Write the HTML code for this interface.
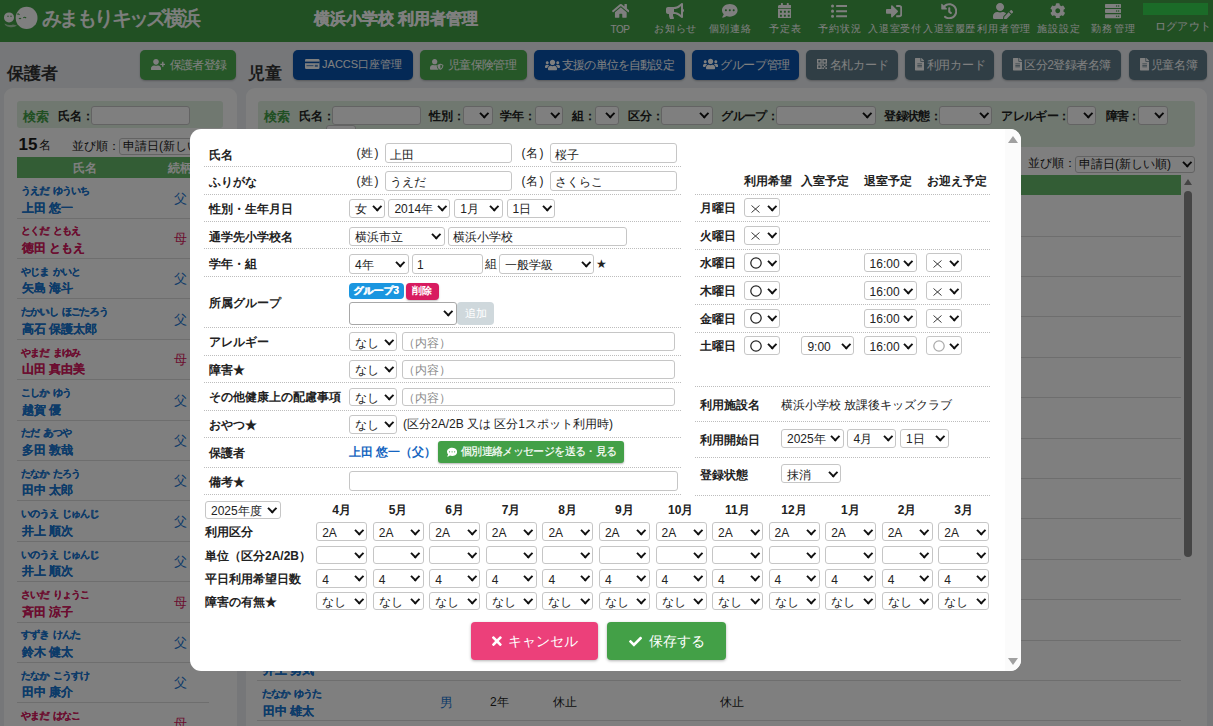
<!DOCTYPE html><html><head><meta charset="utf-8"><title>利用者管理</title><style>
*{box-sizing:border-box}
html,body{margin:0;padding:0}
body{width:1213px;height:726px;overflow:hidden;position:relative;background:#eceff3;font-family:"Liberation Sans",sans-serif;color:#222}
.ab{position:absolute}
.t{position:absolute;white-space:nowrap;line-height:1}
.hdr{left:0;top:0;width:1213px;height:42px;background:#43a047}
.nav{position:absolute;top:0;height:42px;text-align:center;color:#fff;font-size:10.5px}
.nav .lbl{position:absolute;left:-30px;right:-30px;top:23px;text-align:center;white-space:nowrap;line-height:11px}
.btn{position:absolute;top:50.2px;height:29.4px;border-radius:5px;color:#fff;font-size:12px;line-height:29px;white-space:nowrap;box-shadow:0 1px 2px rgba(0,0,0,.25)}
.bg{background:#4caf50}.bn{background:#0852ac}.bd{background:#607d8b}
.card{position:absolute;background:#fff;border-radius:9px}
.sbox{position:absolute;background:#e1f0e1;border-radius:3px}
.lab{position:absolute;font-size:12px;font-weight:bold;white-space:nowrap;line-height:1;color:#222}
.in{position:absolute;height:20px;border:1px solid #c6c6c6;border-radius:3px;background:#fff;font-size:12px;line-height:18px;padding-left:4px;white-space:nowrap;color:#222;overflow:hidden}
.sl{position:absolute;height:20px;border:1px solid #c6c6c6;border-radius:3px;background:#fff;font-size:12px;line-height:18px;padding-left:5px;white-space:nowrap;color:#222}
.sl:after{content:"";position:absolute;right:4px;top:calc(50% - 5px);width:4.5px;height:4.5px;border-right:2px solid #111;border-bottom:2px solid #111;transform:rotate(45deg)}
.dot{position:absolute;height:1px;background-image:linear-gradient(to right,#bdbdbd 50%,transparent 50%);background-size:2px 1px}
.ovl{position:absolute;left:0;top:0;width:1213px;height:726px;background:rgba(0,0,0,.5)}
.modal{position:absolute;left:190px;top:129px;width:831px;height:542px;background:#fff;border-radius:11px;overflow:hidden}
</style></head><body>
<div class="ab hdr"></div>
<svg class="ab" style="left:0;top:0" width="42" height="42" viewBox="0 0 42 42"><circle cx="9" cy="17.4" r="5" fill="#fff"/><path d="M4.5 23.5 Q9 26 13 24.5 L17 25.5 Q14 28 9 27 Q5 26 4.5 23.5Z" fill="#fff" opacity=".55"/><ellipse cx="26.6" cy="17.9" rx="10.9" ry="11.1" fill="#fff"/><path d="M17.3 14.3 q1.2 -1 2.2 0.6 M19 18.2 q1 1.2 2 -0.2 M23.3 17.8 q1.5 -1.3 2.8 0.3" stroke="#43a047" stroke-width="1.1" fill="none"/><circle cx="8" cy="16.3" r=".7" fill="#43a047"/><circle cx="11" cy="16.3" r=".7" fill="#43a047"/></svg>
<div class="t" style="left:42px;top:7.5px;font-size:20px;color:#fff;letter-spacing:-2.6px;-webkit-text-stroke:0.6px #fff">みまもりキッズ横浜</div>
<div class="t" style="left:314px;top:11px;font-size:16px;font-weight:bold;color:#fff;-webkit-text-stroke:0.35px #fff">横浜小学校 利用者管理</div>
<div class="t" style="left:610.6px;top:24.5px;font-size:10px;color:#fff;letter-spacing:-0.50px">TOP</div>
<svg style="position:absolute;left:611.9px;top:2.5px" width="17.60" height="15.64" viewBox="0 0 576 512"><path fill="#fff" d="M280.37 148.26L96 300.11V464a16 16 0 0 0 16 16l112.06-.29a16 16 0 0 0 15.92-16V368a16 16 0 0 1 16-16h64a16 16 0 0 1 16 16v95.64a16 16 0 0 0 16 16.05L464 480a16 16 0 0 0 16-16V300L295.67 148.26a12.19 12.19 0 0 0-15.3 0zM571.6 251.47L488 182.56V44.05a12 12 0 0 0-12-12h-56a12 12 0 0 0-12 12v72.61L318.47 43a48 48 0 0 0-61 0L4.34 251.47a12 12 0 0 0-1.6 16.9l25.5 31A12 12 0 0 0 45.15 301l235.22-193.74a12.19 12.19 0 0 1 15.3 0L530.9 301a12 12 0 0 0 16.9-1.6l25.5-31a12 12 0 0 0-1.7-16.93z"/></svg>
<div class="t" style="left:654.1px;top:23.5px;font-size:10px;color:#fff;letter-spacing:0.73px">お知らせ</div>
<svg style="position:absolute;left:666.2px;top:2.5px" width="18.00" height="16.00" viewBox="0 0 576 512"><path fill="#fff" d="M576 240c0-23.63-12.95-44.04-32-55.12V32.01C544 23.26 537.02 0 512 0c-7.120 0-14.19 2.38-19.98 7.020l-85.03 68.03C364.28 109.19 310.66 128 256 128H64c-35.35 0-64 28.65-64 64v96c0 35.35 28.65 64 64 64h33.7c-1.39 10.48-2.18 21.14-2.18 32 0 39.77 9.26 77.35 25.56 110.94 5.19 10.69 16.52 17.06 28.4 17.06h74.28c26.05 0 41.69-29.84 25.9-50.56-16.4-21.52-26.15-48.36-26.15-77.44 0-11.11 1.620-21.79 4.41-32H256c54.66 0 108.28 18.81 150.98 52.95l85.03 68.03a32.023 32.023 0 0 0 19.98 7.02c24.92 0 32-22.78 32-32V295.13C563.05 284.04 576 263.63 576 240zm-96 141.42l-33.05-26.44C392.95 311.78 325.12 288 256 288v-96c69.12 0 136.95-23.78 190.95-66.98L480 98.58v282.84z"/></svg>
<div class="t" style="left:708.5px;top:23.5px;font-size:10px;color:#fff;letter-spacing:0.97px">個別連絡</div>
<svg style="position:absolute;left:722.2px;top:2.5px" width="15.60" height="15.60" viewBox="0 0 512 512"><path fill="#fff" d="M256 32C114.6 32 0 125.1 0 240c0 49.6 21.4 95 57 130.7C44.5 421.1 2.7 466 2.2 466.5c-2.2 2.3-2.8 5.7-1.5 8.7S4.8 480 8 480c66.3 0 116-31.8 140.6-51.4 32.7 12.3 69 19.4 107.4 19.4 141.4 0 256-93.1 256-208S397.4 32 256 32zM128 272c-17.7 0-32-14.3-32-32s14.3-32 32-32 32 14.3 32 32-14.3 32-32 32zm128 0c-17.7 0-32-14.3-32-32s14.3-32 32-32 32 14.3 32 32-14.3 32-32 32zm128 0c-17.7 0-32-14.3-32-32s14.3-32 32-32 32 14.3 32 32-14.3 32-32 32z"/></svg>
<div class="t" style="left:768.6px;top:23.5px;font-size:10px;color:#fff;letter-spacing:1.40px">予定表</div>
<svg style="position:absolute;left:777.8px;top:2.5px" width="13.70" height="15.66" viewBox="0 0 448 512"><path fill="#fff" d="M0 464c0 26.5 21.5 48 48 48h352c26.5 0 48-21.5 48-48V192H0v272zm320-196c0-6.6 5.4-12 12-12h40c6.6 0 12 5.4 12 12v40c0 6.6-5.4 12-12 12h-40c-6.6 0-12-5.4-12-12v-40zm0 128c0-6.6 5.4-12 12-12h40c6.6 0 12 5.4 12 12v40c0 6.6-5.4 12-12 12h-40c-6.6 0-12-5.4-12-12v-40zM192 268c0-6.6 5.4-12 12-12h40c6.6 0 12 5.4 12 12v40c0 6.6-5.4 12-12 12h-40c-6.6 0-12-5.4-12-12v-40zm0 128c0-6.6 5.4-12 12-12h40c6.6 0 12 5.4 12 12v40c0 6.6-5.4 12-12 12h-40c-6.6 0-12-5.4-12-12v-40zM64 268c0-6.6 5.4-12 12-12h40c6.6 0 12 5.4 12 12v40c0 6.6-5.4 12-12 12H76c-6.6 0-12-5.4-12-12v-40zm0 128c0-6.6 5.4-12 12-12h40c6.6 0 12 5.4 12 12v40c0 6.6-5.4 12-12 12H76c-6.6 0-12-5.4-12-12v-40zM400 64h-48V16c0-8.8-7.2-16-16-16h-32c-8.8 0-16 7.2-16 16v48H160V16c0-8.8-7.2-16-16-16h-32c-8.8 0-16 7.2-16 16v48H48C21.5 64 0 85.5 0 112v48h448v-48c0-26.5-21.5-48-48-48z"/></svg>
<div class="t" style="left:818.3px;top:23.5px;font-size:10px;color:#fff;letter-spacing:0.93px">予約状況</div>
<svg style="position:absolute;left:830.9px;top:2.5px" width="16.30" height="16.30" viewBox="0 0 512 512"><path fill="#fff" d="M48 48a48 48 0 1 0 48 48 48 48 0 0 0-48-48zm0 160a48 48 0 1 0 48 48 48 48 0 0 0-48-48zm0 160a48 48 0 1 0 48 48 48 48 0 0 0-48-48zm448 16H176a16 16 0 0 0-16 16v32a16 16 0 0 0 16 16h320a16 16 0 0 0 16-16v-32a16 16 0 0 0-16-16zm0-320H176a16 16 0 0 0-16 16v32a16 16 0 0 0 16 16h320a16 16 0 0 0 16-16V80a16 16 0 0 0-16-16zm0 160H176a16 16 0 0 0-16 16v32a16 16 0 0 0 16 16h320a16 16 0 0 0 16-16v-32a16 16 0 0 0-16-16z"/></svg>
<div class="t" style="left:868px;top:23.5px;font-size:10px;color:#fff;letter-spacing:0.75px">入退室受付</div>
<svg style="position:absolute;left:886.1px;top:2.5px" width="16.30" height="16.30" viewBox="0 0 512 512"><path fill="#fff" d="M416 448h-84c-6.6 0-12-5.4-12-12v-40c0-6.6 5.4-12 12-12h84c17.7 0 32-14.3 32-32V160c0-17.7-14.3-32-32-32h-84c-6.6 0-12-5.4-12-12V76c0-6.6 5.4-12 12-12h84c53 0 96 43 96 96v192c0 53-43 96-96 96zm-47-201L201 79c-15-15-41-4.5-41 17v96H24c-13.3 0-24 10.7-24 24v96c0 13.3 10.7 24 24 24h136v96c0 21.5 26 32 41 17l168-168c9.3-9.4 9.3-24.6 0-34z"/></svg>
<div class="t" style="left:923.3px;top:23.5px;font-size:10px;color:#fff;letter-spacing:0.55px">入退室履歴</div>
<svg style="position:absolute;left:940.5419354838709px;top:2.5px" width="16.52" height="16.52" viewBox="0 0 512 512"><path fill="#fff" d="M504 255.531c.253 136.64-111.18 248.372-247.82 248.468-59.015.042-113.223-20.53-155.822-54.911-11.077-8.94-11.905-25.541-1.839-35.607l11.267-11.267c8.609-8.609 22.353-9.551 31.891-1.984C173.062 425.135 212.781 440 256 440c101.705 0 184-82.311 184-184 0-101.705-82.311-184-184-184-48.814 0-93.149 18.969-126.068 49.932l50.754 50.754c10.08 10.08 2.941 27.314-11.313 27.314H24c-8.837 0-16-7.163-16-16V38.627c0-14.254 17.234-21.393 27.314-11.314l49.372 49.372C129.209 34.136 189.552 8 256 8c136.81 0 247.747 110.78 248 247.531zm-180.912 78.784l9.823-12.63c8.138-10.463 6.253-25.542-4.21-33.679L288 256.349V152c0-13.255-10.745-24-24-24h-16c-13.255 0-24 10.745-24 24v135.651l65.409 50.874c10.463 8.137 25.541 6.253 33.679-4.21z"/></svg>
<div class="t" style="left:977.4px;top:23.5px;font-size:10px;color:#fff;letter-spacing:0.72px">利用者管理</div>
<svg style="position:absolute;left:993.1px;top:2.5px" width="20.20" height="16.16" viewBox="0 0 640 512"><path fill="#fff" d="M224 256c70.7 0 128-57.3 128-128S294.7 0 224 0 96 57.3 96 128s57.3 128 128 128zm89.6 32h-16.7c-22.2 10.2-46.9 16-72.9 16s-50.6-5.8-72.9-16h-16.7C60.2 288 0 348.2 0 422.4V464c0 26.5 21.5 48 48 48h274.9c-2.4-6.8-3.4-14-2.6-21.3l6.8-60.9 1.2-11.1 7.9-7.9 77.3-77.3c-24.5-27.7-60-45.5-99.9-45.5zm45.3 145.3l-6.8 61c-1.1 10.2 7.5 18.8 17.6 17.6l60.9-6.8 137.9-137.9-71.7-71.7-137.9 137.8zM633 268.9L595.1 231c-9.3-9.3-24.5-9.3-33.8 0l-37.8 37.8-4.1 4.1 71.8 71.7 41.8-41.8c9.3-9.4 9.3-24.5 0-33.9z"/></svg>
<div class="t" style="left:1036.8px;top:23.5px;font-size:10px;color:#fff;letter-spacing:1.03px">施設設定</div>
<svg style="position:absolute;left:1050.3843096234311px;top:2.5px" width="15.53" height="15.53" viewBox="0 0 512 512"><path fill="#fff" d="M487.4 315.7l-42.6-24.6c4.3-23.2 4.3-47 0-70.2l42.6-24.6c4.9-2.8 7.1-8.6 5.5-14-11.1-35.6-30-67.8-54.7-94.6-3.8-4.1-10-5.1-14.8-2.3L380.8 110c-17.9-15.4-38.5-27.3-60.8-35.1V25.8c0-5.6-3.9-10.5-9.4-11.7-36.7-8.2-74.3-7.8-109.2 0-5.5 1.2-9.4 6.1-9.4 11.7V75c-22.2 7.9-42.8 19.8-60.8 35.1L88.7 85.5c-4.9-2.8-11-1.9-14.8 2.3-24.7 26.7-43.6 58.9-54.7 94.6-1.700 5.4.6 11.2 5.5 14L67.3 221c-4.3 23.2-4.3 47 0 70.2l-42.6 24.6c-4.9 2.8-7.1 8.6-5.5 14 11.1 35.6 30 67.8 54.7 94.6 3.8 4.1 10 5.1 14.8 2.3l42.6-24.6c17.9 15.4 38.5 27.3 60.8 35.1v49.2c0 5.6 3.9 10.5 9.4 11.7 36.7 8.2 74.3 7.8 109.2 0 5.5-1.2 9.4-6.1 9.4-11.7v-49.2c22.2-7.9 42.8-19.8 60.8-35.1l42.6 24.6c4.9 2.8 11 1.9 14.8-2.3 24.7-26.7 43.6-58.9 54.7-94.6 1.5-5.5-.7-11.3-5.6-14.1zM256 336c-44.1 0-80-35.9-80-80s35.9-80 80-80 80 35.9 80 80-35.9 80-80 80z"/></svg>
<div class="t" style="left:1091.4px;top:23.5px;font-size:10px;color:#fff;letter-spacing:1.10px">勤務管理</div>
<svg style="position:absolute;left:1104.7px;top:2.5px" width="16.20" height="16.20" viewBox="0 0 512 512"><path fill="#fff" d="M480 160H32c-17.673 0-32-14.327-32-32V64c0-17.673 14.327-32 32-32h448c17.673 0 32 14.327 32 32v64c0 17.673-14.327 32-32 32zm-48-88c-13.255 0-24 10.745-24 24s10.745 24 24 24 24-10.745 24-24-10.745-24-24-24zm-64 0c-13.255 0-24 10.745-24 24s10.745 24 24 24 24-10.745 24-24-10.745-24-24-24zm112 248H32c-17.673 0-32-14.327-32-32v-64c0-17.673 14.327-32 32-32h448c17.673 0 32 14.327 32 32v64c0 17.673-14.327 32-32 32zm-48-88c-13.255 0-24 10.745-24 24s10.745 24 24 24 24-10.745 24-24-10.745-24-24-24zm-64 0c-13.255 0-24 10.745-24 24s10.745 24 24 24 24-10.745 24-24-10.745-24-24-24zm112 248H32c-17.673 0-32-14.327-32-32v-64c0-17.673 14.327-32 32-32h448c17.673 0 32 14.327 32 32v64c0 17.673-14.327 32-32 32zm-48-88c-13.255 0-24 10.745-24 24s10.745 24 24 24 24-10.745 24-24-10.745-24-24-24zm-64 0c-13.255 0-24 10.745-24 24s10.745 24 24 24 24-10.745 24-24-10.745-24-24-24z"/></svg>
<div class="ab" style="left:1143px;top:3px;width:65px;height:12px;background:#36d650"></div>
<div class="t" style="left:1154.5px;top:21px;font-size:11px;color:#fff;letter-spacing:0.4px">ログアウト</div>
<div class="t" style="left:6.5px;top:64.5px;font-size:17px;font-weight:bold;color:#333">保護者</div>
<div class="t" style="left:248px;top:64.5px;font-size:17px;font-weight:bold;color:#333">児童</div>
<div class="btn bg" style="left:140.4px;width:96.0px"></div>
<div class="t" style="left:169.6px;top:58.5px;font-size:12px;color:#fff;letter-spacing:-0.65px">保護者登録</div>
<svg style="position:absolute;left:150.9px;top:58.78px" width="14.30" height="11.44" viewBox="0 0 640 512"><path fill="#fff" d="M624 208h-64v-64c0-8.8-7.2-16-16-16h-32c-8.8 0-16 7.2-16 16v64h-64c-8.8 0-16 7.2-16 16v32c0 8.8 7.2 16 16 16h64v64c0 8.8 7.2 16 16 16h32c8.8 0 16-7.2 16-16v-64h64c8.8 0 16-7.2 16-16v-32c0-8.8-7.2-16-16-16zm-400 48c70.7 0 128-57.3 128-128S294.7 0 224 0 96 57.3 96 128s57.3 128 128 128zm89.6 32h-16.7c-22.2 10.2-46.9 16-72.9 16s-50.6-5.8-72.9-16h-16.7C60.2 288 0 348.2 0 422.4V464c0 26.5 21.5 48 48 48h352c26.5 0 48-21.5 48-48v-41.6c0-74.2-60.2-134.4-134.4-134.4z"/></svg>
<div class="btn bn" style="left:293.2px;width:119.60000000000002px"></div>
<div class="t" style="left:322.1px;top:59px;font-size:11px;color:#fff;letter-spacing:-0.01px">JACCS口座管理</div>
<svg class="ab" style="left:305px;top:59px" width="14.5" height="10" viewBox="0 0 14.5 10"><rect x="0" y="0" width="14.5" height="10" rx="1.2" fill="#fff"/><rect x="0" y="2.6" width="14.5" height="1.6" fill="#0852ac"/><rect x="1.5" y="6" width="7" height="1.2" fill="#0852ac" opacity=".6"/><rect x="9.8" y="5.8" width="3" height="2" fill="#0852ac" opacity=".7"/></svg>
<div class="btn bg" style="left:420px;width:106.79999999999995px"></div>
<div class="t" style="left:447.9px;top:58.5px;font-size:12px;color:#fff;letter-spacing:-0.62px">児童保険管理</div>
<svg style="position:absolute;left:430.3px;top:59.14px" width="13.40" height="10.72" viewBox="0 0 640 512"><path fill="#fff" d="M622.3 271.1l-115.2-45c-4.1-1.6-12.6-3.7-22.2 0l-115.2 45c-10.7 4.2-17.7 14-17.7 24.9 0 111.6 68.7 188.8 132.9 213.9 9.6 3.7 18 1.6 22.2 0C558.4 489.9 640 420.5 640 296c0-10.9-7-20.7-17.7-24.9zM496 462.4V273.3l95.5 37.3c-5.6 87.1-60.9 135.4-95.5 151.8zM224 256c70.7 0 128-57.3 128-128S294.7 0 224 0 96 57.3 96 128s57.3 128 128 128zm96 40c0-2.5.8-4.8 1.1-7.2-2.5-.1-4.9-.8-7.5-.8h-16.7c-22.2 10.2-46.9 16-72.9 16s-50.6-5.8-72.9-16h-16.7C60.2 288 0 348.2 0 422.4V464c0 26.5 21.5 48 48 48h352c6.8 0 13.3-1.5 19.2-4-54-42.9-99.2-116.7-99.2-212z"/></svg>
<div class="btn bn" style="left:533.8px;width:150.9000000000001px"></div>
<div class="t" style="left:562.1px;top:58.5px;font-size:12px;color:#fff;letter-spacing:-0.83px">支援の単位を自動設定</div>
<svg style="position:absolute;left:544.6px;top:58.5px" width="15.00" height="12.00" viewBox="0 0 640 512"><path fill="#fff" d="M96 224c35.3 0 64-28.7 64-64s-28.7-64-64-64-64 28.7-64 64 28.7 64 64 64zm448 0c35.3 0 64-28.7 64-64s-28.7-64-64-64-64 28.7-64 64 28.7 64 64 64zm32 32h-64c-17.6 0-33.5 7.1-45.1 18.6 40.3 22.1 68.9 62 75.1 109.4h66c17.7 0 32-14.3 32-32v-32c0-35.3-28.7-64-64-64zm-256 0c61.9 0 112-50.1 112-112S381.9 32 320 32 208 82.1 208 144s50.1 112 112 112zm76.8 32h-8.3c-20.8 10-43.9 16-68.5 16s-47.6-6-68.5-16h-8.3C179.6 288 128 339.6 128 403.2V432c0 26.5 21.5 48 48 48h288c26.5 0 48-21.5 48-48v-28.8c0-63.6-51.6-115.2-115.2-115.2zm-223.7-13.4C161.5 263.1 145.6 256 128 256H64c-35.3 0-64 28.7-64 64v32c0 17.7 14.3 32 32 32h65.9c6.3-47.4 34.9-87.3 75.2-109.4z"/></svg>
<div class="btn bn" style="left:691.7px;width:107.29999999999995px"></div>
<div class="t" style="left:720.2px;top:58.5px;font-size:12px;color:#fff;letter-spacing:-0.40px">グループ管理</div>
<svg style="position:absolute;left:702.7px;top:58.46px" width="15.10" height="12.08" viewBox="0 0 640 512"><path fill="#fff" d="M96 224c35.3 0 64-28.7 64-64s-28.7-64-64-64-64 28.7-64 64 28.7 64 64 64zm448 0c35.3 0 64-28.7 64-64s-28.7-64-64-64-64 28.7-64 64 28.7 64 64 64zm32 32h-64c-17.6 0-33.5 7.1-45.1 18.6 40.3 22.1 68.9 62 75.1 109.4h66c17.7 0 32-14.3 32-32v-32c0-35.3-28.7-64-64-64zm-256 0c61.9 0 112-50.1 112-112S381.9 32 320 32 208 82.1 208 144s50.1 112 112 112zm76.8 32h-8.3c-20.8 10-43.9 16-68.5 16s-47.6-6-68.5-16h-8.3C179.6 288 128 339.6 128 403.2V432c0 26.5 21.5 48 48 48h288c26.5 0 48-21.5 48-48v-28.8c0-63.6-51.6-115.2-115.2-115.2zm-223.7-13.4C161.5 263.1 145.6 256 128 256H64c-35.3 0-64 28.7-64 64v32c0 17.7 14.3 32 32 32h65.9c6.3-47.4 34.9-87.3 75.2-109.4z"/></svg>
<div class="btn bd" style="left:805.8px;width:91.90000000000009px"></div>
<div class="t" style="left:829.6px;top:58.5px;font-size:12px;color:#fff;letter-spacing:-0.20px">名札カード</div>
<svg class="ab" style="left:817px;top:59.3px" width="10" height="10" viewBox="0 0 10 10"><g fill="none" stroke="#fff" stroke-width="1.3"><rect x=".65" y=".65" width="3.4" height="3.4"/><rect x="5.95" y=".65" width="3.4" height="3.4"/><rect x=".65" y="5.95" width="3.4" height="3.4"/></g><g fill="#fff"><rect x="5.3" y="5.3" width="1.6" height="1.6"/><rect x="8.4" y="5.3" width="1.6" height="1.6"/><rect x="5.3" y="8.4" width="1.6" height="1.6"/><rect x="8.4" y="8.4" width="1.6" height="1.6"/><rect x="6.9" y="6.9" width="1.5" height="1.5"/></g></svg>
<div class="btn bd" style="left:904.5px;width:89.89999999999998px"></div>
<div class="t" style="left:926.7px;top:58.5px;font-size:12px;color:#fff;letter-spacing:-0.20px">利用カード</div>
<svg style="position:absolute;left:915px;top:58.3px" width="9.30" height="12.40" viewBox="0 0 384 512"><path fill="#fff" d="M224 136V0H24C10.7 0 0 10.7 0 24v464c0 13.3 10.7 24 24 24h336c13.3 0 24-10.7 24-24V160H248c-13.2 0-24-10.8-24-24zm64 236c0 6.6-5.4 12-12 12H108c-6.6 0-12-5.4-12-12v-8c0-6.6 5.4-12 12-12h168c6.6 0 12 5.4 12 12v8zm0-64c0 6.6-5.4 12-12 12H108c-6.6 0-12-5.4-12-12v-8c0-6.6 5.4-12 12-12h168c6.6 0 12 5.4 12 12v8zm0-72v8c0 6.6-5.4 12-12 12H108c-6.6 0-12-5.4-12-12v-8c0-6.6 5.4-12 12-12h168c6.6 0 12 5.4 12 12zm96-114.1v6.1H256V0h6.1c6.4 0 12.5 2.5 17 7l97.9 98c4.5 4.5 7 10.6 7 16.9z"/></svg>
<div class="btn bd" style="left:1002.2px;width:118.5px"></div>
<div class="t" style="left:1024.4px;top:58.5px;font-size:12px;color:#fff;letter-spacing:-0.56px">区分2登録者名簿</div>
<svg style="position:absolute;left:1013px;top:58.3px" width="9.30" height="12.40" viewBox="0 0 384 512"><path fill="#fff" d="M224 136V0H24C10.7 0 0 10.7 0 24v464c0 13.3 10.7 24 24 24h336c13.3 0 24-10.7 24-24V160H248c-13.2 0-24-10.8-24-24zm64 236c0 6.6-5.4 12-12 12H108c-6.6 0-12-5.4-12-12v-8c0-6.6 5.4-12 12-12h168c6.6 0 12 5.4 12 12v8zm0-64c0 6.6-5.4 12-12 12H108c-6.6 0-12-5.4-12-12v-8c0-6.6 5.4-12 12-12h168c6.6 0 12 5.4 12 12v8zm0-72v8c0 6.6-5.4 12-12 12H108c-6.6 0-12-5.4-12-12v-8c0-6.6 5.4-12 12-12h168c6.6 0 12 5.4 12 12zm96-114.1v6.1H256V0h6.1c6.4 0 12.5 2.5 17 7l97.9 98c4.5 4.5 7 10.6 7 16.9z"/></svg>
<div class="btn bd" style="left:1128.6px;width:78.60000000000014px"></div>
<div class="t" style="left:1150.7px;top:58.5px;font-size:12px;color:#fff;letter-spacing:-0.33px">児童名簿</div>
<svg style="position:absolute;left:1139.5px;top:58.3px" width="9.30" height="12.40" viewBox="0 0 384 512"><path fill="#fff" d="M224 136V0H24C10.7 0 0 10.7 0 24v464c0 13.3 10.7 24 24 24h336c13.3 0 24-10.7 24-24V160H248c-13.2 0-24-10.8-24-24zm64 236c0 6.6-5.4 12-12 12H108c-6.6 0-12-5.4-12-12v-8c0-6.6 5.4-12 12-12h168c6.6 0 12 5.4 12 12v8zm0-64c0 6.6-5.4 12-12 12H108c-6.6 0-12-5.4-12-12v-8c0-6.6 5.4-12 12-12h168c6.6 0 12 5.4 12 12v8zm0-72v8c0 6.6-5.4 12-12 12H108c-6.6 0-12-5.4-12-12v-8c0-6.6 5.4-12 12-12h168c6.6 0 12 5.4 12 12zm96-114.1v6.1H256V0h6.1c6.4 0 12.5 2.5 17 7l97.9 98c4.5 4.5 7 10.6 7 16.9z"/></svg>
<div class="card" style="left:4px;top:88px;width:233px;height:700px"></div>
<div class="card" style="left:245.5px;top:88px;width:961px;height:700px"></div>
<div class="sbox" style="left:17px;top:101px;width:206px;height:27px"></div>
<div class="t" style="left:23px;top:110px;font-size:13px;font-weight:bold;color:#43a047">検索</div>
<div class="lab" style="left:58px;top:110px">氏名：</div>
<div class="in" style="left:91.4px;top:106px;width:99px;height:19px"></div>
<div class="t" style="left:18.5px;top:136px;font-size:17px;font-weight:bold;color:#1a1a1a">15</div>
<div class="t" style="left:39px;top:139px;font-size:12px;color:#222">名</div>
<div class="t" style="left:72px;top:140px;font-size:12px;color:#222">並び順：</div>
<div class="sl" style="left:119px;top:137.5px;width:120px;height:17px;line-height:15px;padding-left:3px">申請日(新しい順)</div>
<div class="ab" style="left:17px;top:157px;width:192px;height:20.5px;background:#66bb6a"></div>
<div class="t" style="left:73px;top:162px;font-size:12px;font-weight:bold;color:#fff">氏名</div>
<div class="t" style="left:168px;top:162px;font-size:12px;font-weight:bold;color:#fff">続柄</div>
<div class="t" style="left:21px;top:186.0px;font-size:10px;font-weight:bold;color:#1976d2;letter-spacing:-0.8px;word-spacing:2px;text-shadow:0.25px 0 0 #1976d2">うえだ ゆういち</div>
<div class="t" style="left:21.5px;top:201.5px;font-size:12px;font-weight:bold;color:#1976d2;text-shadow:0.3px 0 0 #1976d2">上田 悠一</div>
<div class="t" style="left:174px;top:191.5px;font-size:13px;color:#1976d2">父</div>
<div class="ab" style="left:17px;top:217.5px;width:192px;height:1px;background:#dcdcdc"></div>
<div class="t" style="left:21px;top:226.4px;font-size:10px;font-weight:bold;color:#d81b60;letter-spacing:-0.8px;word-spacing:2px;text-shadow:0.25px 0 0 #d81b60">とくだ ともえ</div>
<div class="t" style="left:21.5px;top:241.9px;font-size:12px;font-weight:bold;color:#d81b60;text-shadow:0.3px 0 0 #d81b60">徳田 ともえ</div>
<div class="t" style="left:174px;top:231.9px;font-size:13px;color:#d81b60">母</div>
<div class="ab" style="left:17px;top:257.9px;width:192px;height:1px;background:#dcdcdc"></div>
<div class="t" style="left:21px;top:266.8px;font-size:10px;font-weight:bold;color:#1976d2;letter-spacing:-0.8px;word-spacing:2px;text-shadow:0.25px 0 0 #1976d2">やじま かいと</div>
<div class="t" style="left:21.5px;top:282.3px;font-size:12px;font-weight:bold;color:#1976d2;text-shadow:0.3px 0 0 #1976d2">矢島 海斗</div>
<div class="t" style="left:174px;top:272.3px;font-size:13px;color:#1976d2">父</div>
<div class="ab" style="left:17px;top:298.3px;width:192px;height:1px;background:#dcdcdc"></div>
<div class="t" style="left:21px;top:307.2px;font-size:10px;font-weight:bold;color:#1976d2;letter-spacing:-0.8px;word-spacing:2px;text-shadow:0.25px 0 0 #1976d2">たかいし ほごたろう</div>
<div class="t" style="left:21.5px;top:322.7px;font-size:12px;font-weight:bold;color:#1976d2;text-shadow:0.3px 0 0 #1976d2">高石 保護太郎</div>
<div class="t" style="left:174px;top:312.7px;font-size:13px;color:#1976d2">父</div>
<div class="ab" style="left:17px;top:338.7px;width:192px;height:1px;background:#dcdcdc"></div>
<div class="t" style="left:21px;top:347.59999999999997px;font-size:10px;font-weight:bold;color:#d81b60;letter-spacing:-0.8px;word-spacing:2px;text-shadow:0.25px 0 0 #d81b60">やまだ まゆみ</div>
<div class="t" style="left:21.5px;top:363.09999999999997px;font-size:12px;font-weight:bold;color:#d81b60;text-shadow:0.3px 0 0 #d81b60">山田 真由美</div>
<div class="t" style="left:174px;top:353.09999999999997px;font-size:13px;color:#d81b60">母</div>
<div class="ab" style="left:17px;top:379.09999999999997px;width:192px;height:1px;background:#dcdcdc"></div>
<div class="t" style="left:21px;top:387.99999999999994px;font-size:10px;font-weight:bold;color:#1976d2;letter-spacing:-0.8px;word-spacing:2px;text-shadow:0.25px 0 0 #1976d2">こしか ゆう</div>
<div class="t" style="left:21.5px;top:403.49999999999994px;font-size:12px;font-weight:bold;color:#1976d2;text-shadow:0.3px 0 0 #1976d2">越賀 優</div>
<div class="t" style="left:174px;top:393.49999999999994px;font-size:13px;color:#1976d2">父</div>
<div class="ab" style="left:17px;top:419.49999999999994px;width:192px;height:1px;background:#dcdcdc"></div>
<div class="t" style="left:21px;top:428.3999999999999px;font-size:10px;font-weight:bold;color:#1976d2;letter-spacing:-0.8px;word-spacing:2px;text-shadow:0.25px 0 0 #1976d2">ただ あつや</div>
<div class="t" style="left:21.5px;top:443.8999999999999px;font-size:12px;font-weight:bold;color:#1976d2;text-shadow:0.3px 0 0 #1976d2">多田 敦哉</div>
<div class="t" style="left:174px;top:433.8999999999999px;font-size:13px;color:#1976d2">父</div>
<div class="ab" style="left:17px;top:459.8999999999999px;width:192px;height:1px;background:#dcdcdc"></div>
<div class="t" style="left:21px;top:468.7999999999999px;font-size:10px;font-weight:bold;color:#1976d2;letter-spacing:-0.8px;word-spacing:2px;text-shadow:0.25px 0 0 #1976d2">たなか たろう</div>
<div class="t" style="left:21.5px;top:484.2999999999999px;font-size:12px;font-weight:bold;color:#1976d2;text-shadow:0.3px 0 0 #1976d2">田中 太郎</div>
<div class="t" style="left:174px;top:474.2999999999999px;font-size:13px;color:#1976d2">父</div>
<div class="ab" style="left:17px;top:500.2999999999999px;width:192px;height:1px;background:#dcdcdc"></div>
<div class="t" style="left:21px;top:509.1999999999999px;font-size:10px;font-weight:bold;color:#1976d2;letter-spacing:-0.8px;word-spacing:2px;text-shadow:0.25px 0 0 #1976d2">いのうえ じゅんじ</div>
<div class="t" style="left:21.5px;top:524.6999999999998px;font-size:12px;font-weight:bold;color:#1976d2;text-shadow:0.3px 0 0 #1976d2">井上 順次</div>
<div class="t" style="left:174px;top:514.6999999999998px;font-size:13px;color:#1976d2">父</div>
<div class="ab" style="left:17px;top:540.6999999999998px;width:192px;height:1px;background:#dcdcdc"></div>
<div class="t" style="left:21px;top:549.5999999999999px;font-size:10px;font-weight:bold;color:#1976d2;letter-spacing:-0.8px;word-spacing:2px;text-shadow:0.25px 0 0 #1976d2">いのうえ じゅんじ</div>
<div class="t" style="left:21.5px;top:565.0999999999999px;font-size:12px;font-weight:bold;color:#1976d2;text-shadow:0.3px 0 0 #1976d2">井上 順次</div>
<div class="t" style="left:174px;top:555.0999999999999px;font-size:13px;color:#1976d2">父</div>
<div class="ab" style="left:17px;top:581.0999999999999px;width:192px;height:1px;background:#dcdcdc"></div>
<div class="t" style="left:21px;top:589.9999999999999px;font-size:10px;font-weight:bold;color:#d81b60;letter-spacing:-0.8px;word-spacing:2px;text-shadow:0.25px 0 0 #d81b60">さいだ りょうこ</div>
<div class="t" style="left:21.5px;top:605.4999999999999px;font-size:12px;font-weight:bold;color:#d81b60;text-shadow:0.3px 0 0 #d81b60">斉田 涼子</div>
<div class="t" style="left:174px;top:595.4999999999999px;font-size:13px;color:#d81b60">母</div>
<div class="ab" style="left:17px;top:621.4999999999999px;width:192px;height:1px;background:#dcdcdc"></div>
<div class="t" style="left:21px;top:630.3999999999999px;font-size:10px;font-weight:bold;color:#1976d2;letter-spacing:-0.8px;word-spacing:2px;text-shadow:0.25px 0 0 #1976d2">すずき けんた</div>
<div class="t" style="left:21.5px;top:645.8999999999999px;font-size:12px;font-weight:bold;color:#1976d2;text-shadow:0.3px 0 0 #1976d2">鈴木 健太</div>
<div class="t" style="left:174px;top:635.8999999999999px;font-size:13px;color:#1976d2">父</div>
<div class="ab" style="left:17px;top:661.8999999999999px;width:192px;height:1px;background:#dcdcdc"></div>
<div class="t" style="left:21px;top:670.7999999999998px;font-size:10px;font-weight:bold;color:#1976d2;letter-spacing:-0.8px;word-spacing:2px;text-shadow:0.25px 0 0 #1976d2">たなか こうすけ</div>
<div class="t" style="left:21.5px;top:686.2999999999998px;font-size:12px;font-weight:bold;color:#1976d2;text-shadow:0.3px 0 0 #1976d2">田中 康介</div>
<div class="t" style="left:174px;top:676.2999999999998px;font-size:13px;color:#1976d2">父</div>
<div class="ab" style="left:17px;top:702.2999999999998px;width:192px;height:1px;background:#dcdcdc"></div>
<div class="t" style="left:21px;top:711.1999999999998px;font-size:10px;font-weight:bold;color:#d81b60;letter-spacing:-0.8px;word-spacing:2px;text-shadow:0.25px 0 0 #d81b60">やまだ はなこ</div>
<div class="t" style="left:21.5px;top:726.6999999999998px;font-size:12px;font-weight:bold;color:#d81b60;text-shadow:0.3px 0 0 #d81b60">山田 花子</div>
<div class="t" style="left:174px;top:716.6999999999998px;font-size:13px;color:#d81b60">母</div>
<div class="ab" style="left:17px;top:742.6999999999998px;width:192px;height:1px;background:#dcdcdc"></div>
<div class="sbox" style="left:257.5px;top:101px;width:937px;height:45.5px"></div>
<div class="t" style="left:263.5px;top:110px;font-size:13px;font-weight:bold;color:#43a047">検索</div>
<div class="lab" style="left:299px;top:110px;letter-spacing:0px">氏名：</div>
<div class="in" style="left:332.3px;top:106px;width:88.39999999999998px;height:18.5px"></div>
<div class="lab" style="left:429px;top:110px;letter-spacing:0px">性別：</div>
<div class="sl" style="left:462.6px;top:106px;width:30.0px;height:18.5px"></div>
<div class="lab" style="left:500px;top:110px;letter-spacing:0px">学年：</div>
<div class="sl" style="left:534.5px;top:106px;width:28.899999999999977px;height:18.5px"></div>
<div class="lab" style="left:572px;top:110px;letter-spacing:0px">組：</div>
<div class="sl" style="left:594.6px;top:106px;width:24.0px;height:18.5px"></div>
<div class="lab" style="left:628px;top:110px;letter-spacing:0px">区分：</div>
<div class="sl" style="left:661.4px;top:106px;width:51.200000000000045px;height:18.5px"></div>
<div class="lab" style="left:721.2px;top:110px;letter-spacing:-0.6px">グループ：</div>
<div class="sl" style="left:776.2px;top:106px;width:99.5px;height:18.5px"></div>
<div class="lab" style="left:884.2px;top:110px;letter-spacing:-0.6px">登録状態：</div>
<div class="sl" style="left:939.4px;top:106px;width:53.10000000000002px;height:18.5px"></div>
<div class="lab" style="left:1001.2px;top:110px;letter-spacing:-0.6px">アレルギー：</div>
<div class="sl" style="left:1067.2px;top:106px;width:29.200000000000045px;height:18.5px"></div>
<div class="lab" style="left:1105.5px;top:110px;letter-spacing:-0.8px">障害：</div>
<div class="sl" style="left:1138.4px;top:106px;width:29.59999999999991px;height:18.5px"></div>
<div class="in" style="left:325.5px;top:125px;width:30px;height:18px"></div>
<div class="t" style="left:1028px;top:157px;font-size:12px;color:#222">並び順：</div>
<div class="sl" style="left:1075px;top:155.5px;width:120px;height:17px;line-height:15px;padding-left:3px">申請日(新しい順)</div>
<div class="ab" style="left:257px;top:175px;width:924px;height:20px;background:#66bb6a"></div>
<div class="ab" style="left:257px;top:235.6px;width:924px;height:1px;background:#dcdcdc"></div>
<div class="ab" style="left:257px;top:276.0px;width:924px;height:1px;background:#dcdcdc"></div>
<div class="ab" style="left:257px;top:316.4px;width:924px;height:1px;background:#dcdcdc"></div>
<div class="ab" style="left:257px;top:356.79999999999995px;width:924px;height:1px;background:#dcdcdc"></div>
<div class="ab" style="left:257px;top:397.19999999999993px;width:924px;height:1px;background:#dcdcdc"></div>
<div class="ab" style="left:257px;top:437.5999999999999px;width:924px;height:1px;background:#dcdcdc"></div>
<div class="ab" style="left:257px;top:477.9999999999999px;width:924px;height:1px;background:#dcdcdc"></div>
<div class="ab" style="left:257px;top:518.3999999999999px;width:924px;height:1px;background:#dcdcdc"></div>
<div class="ab" style="left:257px;top:558.7999999999998px;width:924px;height:1px;background:#dcdcdc"></div>
<div class="ab" style="left:257px;top:599.1999999999998px;width:924px;height:1px;background:#dcdcdc"></div>
<div class="ab" style="left:257px;top:639.5999999999998px;width:924px;height:1px;background:#dcdcdc"></div>
<div class="ab" style="left:257px;top:679.9999999999998px;width:924px;height:1px;background:#dcdcdc"></div>
<div class="ab" style="left:257px;top:720.3999999999997px;width:924px;height:1px;background:#dcdcdc"></div>
<div class="t" style="left:262.5px;top:663.5px;font-size:12px;font-weight:bold;color:#1976d2;text-shadow:0.3px 0 0 #1976d2">井上 勇気</div>
<div class="t" style="left:262px;top:689px;font-size:10px;font-weight:bold;color:#1976d2;letter-spacing:-0.8px;word-spacing:2px;text-shadow:0.25px 0 0 #1976d2">たなか ゆうた</div>
<div class="t" style="left:262.5px;top:705px;font-size:12px;font-weight:bold;color:#1976d2;text-shadow:0.3px 0 0 #1976d2">田中 雄太</div>
<div class="t" style="left:440px;top:696px;font-size:13px;color:#1976d2">男</div>
<div class="t" style="left:490px;top:696px;font-size:12px;color:#222">2年</div>
<div class="t" style="left:553px;top:696px;font-size:12px;color:#222">休止</div>
<div class="t" style="left:720px;top:696px;font-size:12px;color:#222">休止</div>
<div class="ab" style="left:1183.5px;top:179px;width:0;height:0;border-left:4.5px solid transparent;border-right:4.5px solid transparent;border-bottom:6px solid #888"></div>
<div class="ab" style="left:1183.6px;top:191.4px;width:8.2px;height:366px;border-radius:4px;background:#8a8a8a"></div>
<div class="ovl"></div>
<div class="ab" style="left:190px;top:129px;width:831px;height:542px;background:#fff;border-radius:11px"></div>
<div class="ab" style="left:1005px;top:129px;width:16px;height:542px;background:#fbfbfb;border-radius:0 11px 11px 0"></div>
<div class="dot" style="left:204px;top:166px;width:478px"></div>
<div class="dot" style="left:204px;top:194px;width:478px"></div>
<div class="dot" style="left:204px;top:221px;width:478px"></div>
<div class="dot" style="left:204px;top:248px;width:478px"></div>
<div class="dot" style="left:204px;top:276px;width:478px"></div>
<div class="dot" style="left:204px;top:327px;width:478px"></div>
<div class="dot" style="left:204px;top:355px;width:478px"></div>
<div class="dot" style="left:204px;top:382px;width:478px"></div>
<div class="dot" style="left:204px;top:410px;width:478px"></div>
<div class="dot" style="left:204px;top:437px;width:478px"></div>
<div class="dot" style="left:204px;top:467px;width:478px"></div>
<div class="dot" style="left:204px;top:494px;width:478px"></div>
<div class="lab" style="left:209px;top:149px">氏名</div>
<div class="t" style="left:356.5px;top:147px;font-size:12px;letter-spacing:1px">(姓)</div>
<div class="in" style="left:385px;top:143px;width:126.5px;height:20px;line-height:18px;padding-top:1.5px;">上田</div>
<div class="t" style="left:521.5px;top:147px;font-size:12px;letter-spacing:1px">(名)</div>
<div class="in" style="left:550px;top:143px;width:127px;height:20px;line-height:18px;padding-top:1.5px;">桜子</div>
<div class="lab" style="left:209px;top:176px">ふりがな</div>
<div class="t" style="left:356.5px;top:174.5px;font-size:12px;letter-spacing:1px">(姓)</div>
<div class="in" style="left:385px;top:171px;width:126.5px;height:19.5px;line-height:17.5px;padding-top:1.5px;">うえだ</div>
<div class="t" style="left:521.5px;top:174.5px;font-size:12px;letter-spacing:1px">(名)</div>
<div class="in" style="left:550px;top:171px;width:127px;height:19.5px;line-height:17.5px;padding-top:1.5px;">さくらこ</div>
<div class="lab" style="left:209px;top:203px">性別・生年月日</div>
<div class="sl" style="left:349px;top:198.5px;width:36px;height:19.5px;line-height:17.5px;padding-top:1.5px;">女</div>
<div class="sl" style="left:388.4px;top:198.5px;width:62.0px;height:19.5px;line-height:17.5px;padding-top:1.5px;">2014年</div>
<div class="sl" style="left:454.3px;top:198.5px;width:48.30000000000001px;height:19.5px;line-height:17.5px;padding-top:1.5px;">1月</div>
<div class="sl" style="left:506.5px;top:198.5px;width:48.5px;height:19.5px;line-height:17.5px;padding-top:1.5px;">1日</div>
<div class="lab" style="left:209px;top:231px">通学先小学校名</div>
<div class="sl" style="left:349px;top:226.5px;width:95.80000000000001px;height:19.19999999999999px;line-height:17.19999999999999px;padding-top:1.5px;">横浜市立</div>
<div class="in" style="left:448.3px;top:226.5px;width:178.90000000000003px;height:19.19999999999999px;line-height:17.19999999999999px;padding-top:1.5px;">横浜小学校</div>
<div class="lab" style="left:209px;top:258px">学年・組</div>
<div class="sl" style="left:349px;top:254.3px;width:59.80000000000001px;height:19.30000000000001px;line-height:17.30000000000001px;padding-top:1.5px;">4年</div>
<div class="in" style="left:412px;top:254.3px;width:71px;height:19.30000000000001px;line-height:17.30000000000001px;padding-top:1.5px;">1</div>
<div class="t" style="left:485px;top:258px;font-size:12px;">組</div>
<div class="sl" style="left:499.4px;top:254.3px;width:94.89999999999998px;height:19.30000000000001px;line-height:17.30000000000001px;padding-top:1.5px;">一般学級</div>
<div class="t" style="left:596px;top:258px;font-size:12px;">★</div>
<div class="lab" style="left:209px;top:297px">所属グループ</div>
<div class="ab" style="left:348.6px;top:283px;width:55px;height:16px;border-radius:4px;background:#1a96e0;color:#fff;font-size:10px;font-weight:bold;line-height:16px;text-align:center;text-shadow:0.3px 0 0 #fff">グループ3</div>
<div class="ab" style="left:405.7px;top:283.3px;width:33.2px;height:16.5px;border-radius:4px;background:#d81b60;color:#fff;font-size:10px;font-weight:bold;line-height:16.5px;text-align:center;box-shadow:0 1px 2px rgba(0,0,0,.25)">削除</div>
<div class="sl" style="left:348.6px;top:302.4px;width:108.19999999999999px;height:22.200000000000045px;line-height:20.200000000000045px;padding-top:1.5px;border-color:#a8a8a8"></div>
<div class="ab" style="left:457.4px;top:302.2px;width:36.3px;height:22.4px;border-radius:4px;background:#cfd8dc;color:#fff;font-size:11px;line-height:22px;text-align:center">追加</div>
<div class="lab" style="left:209px;top:336px">アレルギー</div>
<div class="sl" style="left:349px;top:332.4px;width:48.39999999999998px;height:18.80000000000001px;line-height:16.80000000000001px;padding-top:1.5px;">なし</div>
<div class="in" style="left:401.5px;top:332.4px;width:273.5px;height:18.80000000000001px;line-height:16.80000000000001px;padding-top:1.5px;color:#8a8a8a;padding-left:0">（内容）</div>
<div class="lab" style="left:209px;top:364px">障害★</div>
<div class="sl" style="left:349px;top:359.8px;width:48.39999999999998px;height:18.80000000000001px;line-height:16.80000000000001px;padding-top:1.5px;">なし</div>
<div class="in" style="left:401.5px;top:359.8px;width:273.5px;height:18.80000000000001px;line-height:16.80000000000001px;padding-top:1.5px;color:#8a8a8a;padding-left:0">（内容）</div>
<div class="lab" style="left:209px;top:391px">その他健康上の配慮事項</div>
<div class="sl" style="left:349px;top:387.5px;width:48.39999999999998px;height:18.80000000000001px;line-height:16.80000000000001px;padding-top:1.5px;">なし</div>
<div class="in" style="left:401.5px;top:387.5px;width:273.5px;height:18.80000000000001px;line-height:16.80000000000001px;padding-top:1.5px;color:#8a8a8a;padding-left:0">（内容）</div>
<div class="lab" style="left:209px;top:419px">おやつ★</div>
<div class="sl" style="left:349px;top:414.9px;width:48.39999999999998px;height:18.80000000000001px;line-height:16.80000000000001px;padding-top:1.5px;">なし</div>
<div class="t" style="left:403px;top:418px;font-size:12px;">(区分2A/2B 又は 区分1スポット利用時)</div>
<div class="lab" style="left:209px;top:447px">保護者</div>
<div class="t" style="left:349px;top:445.5px;font-size:12px;color:#1565c0;font-weight:bold">上田 悠一（父）</div>
<div class="ab" style="left:438px;top:441.3px;width:186px;height:21.7px;border-radius:3px;background:#43a047;box-shadow:0 1px 2px rgba(0,0,0,.3)"></div>
<svg style="position:absolute;left:446.9px;top:447px" width="10.20" height="10.20" viewBox="0 0 512 512"><path fill="#fff" d="M256 32C114.6 32 0 125.1 0 240c0 49.6 21.4 95 57 130.7C44.5 421.1 2.7 466 2.2 466.5c-2.2 2.3-2.8 5.7-1.5 8.7S4.8 480 8 480c66.3 0 116-31.8 140.6-51.4 32.7 12.3 69 19.4 107.4 19.4 141.4 0 256-93.1 256-208S397.4 32 256 32zM128 272c-17.7 0-32-14.3-32-32s14.3-32 32-32 32 14.3 32 32-14.3 32-32 32zm128 0c-17.7 0-32-14.3-32-32s14.3-32 32-32 32 14.3 32 32-14.3 32-32 32zm128 0c-17.7 0-32-14.3-32-32s14.3-32 32-32 32 14.3 32 32-14.3 32-32 32z"/></svg>
<div class="t" style="left:460.8px;top:445.5px;font-size:11px;color:#fff;letter-spacing:-0.62px;-webkit-text-stroke:0.2px #fff">個別連絡メッセージを送る・見る</div>
<div class="lab" style="left:209px;top:476px">備考★</div>
<div class="in" style="left:349px;top:471.2px;width:328.79999999999995px;height:19.600000000000023px;line-height:17.600000000000023px;padding-top:1.5px;"></div>
<div class="t" style="left:744.4px;top:175px;font-size:12px;font-weight:bold">利用希望</div>
<div class="t" style="left:801.4px;top:175px;font-size:12px;font-weight:bold">入室予定</div>
<div class="t" style="left:863.6px;top:175px;font-size:12px;font-weight:bold">退室予定</div>
<div class="t" style="left:927.2px;top:175px;font-size:12px;font-weight:bold">お迎え予定</div>
<div class="dot" style="left:695px;top:194px;width:296px"></div>
<div class="dot" style="left:695px;top:221px;width:296px"></div>
<div class="dot" style="left:695px;top:249px;width:296px"></div>
<div class="dot" style="left:695px;top:276px;width:296px"></div>
<div class="dot" style="left:695px;top:304px;width:296px"></div>
<div class="dot" style="left:695px;top:331.5px;width:296px"></div>
<div class="dot" style="left:695px;top:386px;width:296px"></div>
<div class="dot" style="left:695px;top:421px;width:296px"></div>
<div class="dot" style="left:695px;top:456.7px;width:296px"></div>
<div class="dot" style="left:695px;top:494.8px;width:296px"></div>
<div class="lab" style="left:700px;top:202.2px">月曜日</div>
<div class="sl" style="left:744.1px;top:198.2px;width:36.10000000000002px;height:19.0px;line-height:17.0px;padding-top:1.5px;"></div>
<svg class="ab" style="left:751.2px;top:204.7px" width="9" height="8" viewBox="0 0 9 8"><path d="M0.5 0.5 L8.5 7.5 M8.5 0.5 L0.5 7.5" stroke="#222" stroke-width="0.9"/></svg>
<div class="lab" style="left:700px;top:229.79999999999998px">火曜日</div>
<div class="sl" style="left:744.1px;top:225.79999999999998px;width:36.10000000000002px;height:19.0px;line-height:17.0px;padding-top:1.5px;"></div>
<svg class="ab" style="left:751.2px;top:232.29999999999998px" width="9" height="8" viewBox="0 0 9 8"><path d="M0.5 0.5 L8.5 7.5 M8.5 0.5 L0.5 7.5" stroke="#222" stroke-width="0.9"/></svg>
<div class="lab" style="left:700px;top:257.4px">水曜日</div>
<div class="sl" style="left:744.1px;top:253.39999999999998px;width:36.10000000000002px;height:19.0px;line-height:17.0px;padding-top:1.5px;"></div>
<svg class="ab" style="left:750.2px;top:257.09999999999997px" width="12" height="12" viewBox="0 0 12 12"><circle cx="6" cy="6" r="5.2" stroke="#222" stroke-width="1.25" fill="none"/></svg>
<div class="sl" style="left:863.6px;top:253.39999999999998px;width:53.39999999999998px;height:19.0px;line-height:17.0px;padding-top:1.5px;">16:00</div>
<div class="sl" style="left:926.3px;top:253.39999999999998px;width:36.200000000000045px;height:19.0px;line-height:17.0px;padding-top:1.5px;"></div>
<svg class="ab" style="left:933.2px;top:259.9px" width="9" height="8" viewBox="0 0 9 8"><path d="M0.5 0.5 L8.5 7.5 M8.5 0.5 L0.5 7.5" stroke="#222" stroke-width="0.9"/></svg>
<div class="lab" style="left:700px;top:285.0px">木曜日</div>
<div class="sl" style="left:744.1px;top:281.0px;width:36.10000000000002px;height:19.0px;line-height:17.0px;padding-top:1.5px;"></div>
<svg class="ab" style="left:750.2px;top:284.7px" width="12" height="12" viewBox="0 0 12 12"><circle cx="6" cy="6" r="5.2" stroke="#222" stroke-width="1.25" fill="none"/></svg>
<div class="sl" style="left:863.6px;top:281.0px;width:53.39999999999998px;height:19.0px;line-height:17.0px;padding-top:1.5px;">16:00</div>
<div class="sl" style="left:926.3px;top:281.0px;width:36.200000000000045px;height:19.0px;line-height:17.0px;padding-top:1.5px;"></div>
<svg class="ab" style="left:933.2px;top:287.5px" width="9" height="8" viewBox="0 0 9 8"><path d="M0.5 0.5 L8.5 7.5 M8.5 0.5 L0.5 7.5" stroke="#222" stroke-width="0.9"/></svg>
<div class="lab" style="left:700px;top:312.6px">金曜日</div>
<div class="sl" style="left:744.1px;top:308.6px;width:36.10000000000002px;height:19.0px;line-height:17.0px;padding-top:1.5px;"></div>
<svg class="ab" style="left:750.2px;top:312.3px" width="12" height="12" viewBox="0 0 12 12"><circle cx="6" cy="6" r="5.2" stroke="#222" stroke-width="1.25" fill="none"/></svg>
<div class="sl" style="left:863.6px;top:308.6px;width:53.39999999999998px;height:19.0px;line-height:17.0px;padding-top:1.5px;">16:00</div>
<div class="sl" style="left:926.3px;top:308.6px;width:36.200000000000045px;height:19.0px;line-height:17.0px;padding-top:1.5px;"></div>
<svg class="ab" style="left:933.2px;top:315.1px" width="9" height="8" viewBox="0 0 9 8"><path d="M0.5 0.5 L8.5 7.5 M8.5 0.5 L0.5 7.5" stroke="#222" stroke-width="0.9"/></svg>
<div class="lab" style="left:700px;top:340.20000000000005px">土曜日</div>
<div class="sl" style="left:744.1px;top:336.20000000000005px;width:36.10000000000002px;height:19.0px;line-height:17.0px;padding-top:1.5px;"></div>
<svg class="ab" style="left:750.2px;top:339.90000000000003px" width="12" height="12" viewBox="0 0 12 12"><circle cx="6" cy="6" r="5.2" stroke="#222" stroke-width="1.25" fill="none"/></svg>
<div class="sl" style="left:801.4px;top:336.20000000000005px;width:52.89999999999998px;height:19.0px;line-height:17.0px;padding-top:1.5px;">9:00</div>
<div class="sl" style="left:863.6px;top:336.20000000000005px;width:53.39999999999998px;height:19.0px;line-height:17.0px;padding-top:1.5px;">16:00</div>
<div class="sl" style="left:926.3px;top:336.20000000000005px;width:36.200000000000045px;height:19.0px;line-height:17.0px;padding-top:1.5px;"></div>
<svg class="ab" style="left:932.5px;top:339.90000000000003px" width="12" height="12" viewBox="0 0 12 12"><circle cx="6" cy="6" r="5.2" stroke="#aaa" stroke-width="1.25" fill="none"/></svg>
<div class="lab" style="left:700px;top:399px">利用施設名</div>
<div class="t" style="left:781px;top:399px;font-size:12px;">横浜小学校 放課後キッズクラブ</div>
<div class="lab" style="left:700px;top:434px">利用開始日</div>
<div class="sl" style="left:781px;top:428.5px;width:62.799999999999955px;height:19.899999999999977px;line-height:17.899999999999977px;padding-top:1.5px;">2025年</div>
<div class="sl" style="left:847.4px;top:428.5px;width:48.89999999999998px;height:19.899999999999977px;line-height:17.899999999999977px;padding-top:1.5px;">4月</div>
<div class="sl" style="left:899.9px;top:428.5px;width:48.89999999999998px;height:19.899999999999977px;line-height:17.899999999999977px;padding-top:1.5px;">1日</div>
<div class="lab" style="left:700px;top:469px">登録状態</div>
<div class="sl" style="left:781px;top:464.1px;width:60.299999999999955px;height:19.299999999999955px;line-height:17.299999999999955px;padding-top:1.5px;">抹消</div>
<div class="sl" style="left:205px;top:500.7px;width:75.5px;height:18.69999999999999px;line-height:16.69999999999999px;padding-top:1.5px;">2025年度</div>
<div class="t" style="left:311.5px;width:60px;top:504px;font-size:12px;font-weight:bold;text-align:center">4月</div>
<div class="t" style="left:368.05px;width:60px;top:504px;font-size:12px;font-weight:bold;text-align:center">5月</div>
<div class="t" style="left:424.6px;width:60px;top:504px;font-size:12px;font-weight:bold;text-align:center">6月</div>
<div class="t" style="left:481.15px;width:60px;top:504px;font-size:12px;font-weight:bold;text-align:center">7月</div>
<div class="t" style="left:537.7px;width:60px;top:504px;font-size:12px;font-weight:bold;text-align:center">8月</div>
<div class="t" style="left:594.25px;width:60px;top:504px;font-size:12px;font-weight:bold;text-align:center">9月</div>
<div class="t" style="left:650.8px;width:60px;top:504px;font-size:12px;font-weight:bold;text-align:center">10月</div>
<div class="t" style="left:707.3499999999999px;width:60px;top:504px;font-size:12px;font-weight:bold;text-align:center">11月</div>
<div class="t" style="left:763.9px;width:60px;top:504px;font-size:12px;font-weight:bold;text-align:center">12月</div>
<div class="t" style="left:820.45px;width:60px;top:504px;font-size:12px;font-weight:bold;text-align:center">1月</div>
<div class="t" style="left:877.0px;width:60px;top:504px;font-size:12px;font-weight:bold;text-align:center">2月</div>
<div class="t" style="left:933.55px;width:60px;top:504px;font-size:12px;font-weight:bold;text-align:center">3月</div>
<div class="lab" style="left:205px;top:526.4px">利用区分</div>
<div class="sl" style="left:316.2px;top:522.4px;width:51.0px;height:18.700000000000045px;line-height:16.700000000000045px;padding-top:1.5px;padding-left:5px">2A</div>
<div class="sl" style="left:372.75px;top:522.4px;width:51.0px;height:18.700000000000045px;line-height:16.700000000000045px;padding-top:1.5px;padding-left:5px">2A</div>
<div class="sl" style="left:429.29999999999995px;top:522.4px;width:51.0px;height:18.700000000000045px;line-height:16.700000000000045px;padding-top:1.5px;padding-left:5px">2A</div>
<div class="sl" style="left:485.84999999999997px;top:522.4px;width:50.99999999999994px;height:18.700000000000045px;line-height:16.700000000000045px;padding-top:1.5px;padding-left:5px">2A</div>
<div class="sl" style="left:542.4px;top:522.4px;width:51.0px;height:18.700000000000045px;line-height:16.700000000000045px;padding-top:1.5px;padding-left:5px">2A</div>
<div class="sl" style="left:598.95px;top:522.4px;width:51.0px;height:18.700000000000045px;line-height:16.700000000000045px;padding-top:1.5px;padding-left:5px">2A</div>
<div class="sl" style="left:655.5px;top:522.4px;width:51.0px;height:18.700000000000045px;line-height:16.700000000000045px;padding-top:1.5px;padding-left:5px">2A</div>
<div class="sl" style="left:712.05px;top:522.4px;width:51.0px;height:18.700000000000045px;line-height:16.700000000000045px;padding-top:1.5px;padding-left:5px">2A</div>
<div class="sl" style="left:768.5999999999999px;top:522.4px;width:51.0px;height:18.700000000000045px;line-height:16.700000000000045px;padding-top:1.5px;padding-left:5px">2A</div>
<div class="sl" style="left:825.15px;top:522.4px;width:51.0px;height:18.700000000000045px;line-height:16.700000000000045px;padding-top:1.5px;padding-left:5px">2A</div>
<div class="sl" style="left:881.7px;top:522.4px;width:51.0px;height:18.700000000000045px;line-height:16.700000000000045px;padding-top:1.5px;padding-left:5px">2A</div>
<div class="sl" style="left:938.25px;top:522.4px;width:51.0px;height:18.700000000000045px;line-height:16.700000000000045px;padding-top:1.5px;padding-left:5px">2A</div>
<div class="lab" style="left:205px;top:549.8px">単位（区分2A/2B）</div>
<div class="sl" style="left:316.2px;top:545.8px;width:51.0px;height:18.700000000000045px;line-height:16.700000000000045px;padding-top:1.5px;padding-left:5px"></div>
<div class="sl" style="left:372.75px;top:545.8px;width:51.0px;height:18.700000000000045px;line-height:16.700000000000045px;padding-top:1.5px;padding-left:5px"></div>
<div class="sl" style="left:429.29999999999995px;top:545.8px;width:51.0px;height:18.700000000000045px;line-height:16.700000000000045px;padding-top:1.5px;padding-left:5px"></div>
<div class="sl" style="left:485.84999999999997px;top:545.8px;width:50.99999999999994px;height:18.700000000000045px;line-height:16.700000000000045px;padding-top:1.5px;padding-left:5px"></div>
<div class="sl" style="left:542.4px;top:545.8px;width:51.0px;height:18.700000000000045px;line-height:16.700000000000045px;padding-top:1.5px;padding-left:5px"></div>
<div class="sl" style="left:598.95px;top:545.8px;width:51.0px;height:18.700000000000045px;line-height:16.700000000000045px;padding-top:1.5px;padding-left:5px"></div>
<div class="sl" style="left:655.5px;top:545.8px;width:51.0px;height:18.700000000000045px;line-height:16.700000000000045px;padding-top:1.5px;padding-left:5px"></div>
<div class="sl" style="left:712.05px;top:545.8px;width:51.0px;height:18.700000000000045px;line-height:16.700000000000045px;padding-top:1.5px;padding-left:5px"></div>
<div class="sl" style="left:768.5999999999999px;top:545.8px;width:51.0px;height:18.700000000000045px;line-height:16.700000000000045px;padding-top:1.5px;padding-left:5px"></div>
<div class="sl" style="left:825.15px;top:545.8px;width:51.0px;height:18.700000000000045px;line-height:16.700000000000045px;padding-top:1.5px;padding-left:5px"></div>
<div class="sl" style="left:881.7px;top:545.8px;width:51.0px;height:18.700000000000045px;line-height:16.700000000000045px;padding-top:1.5px;padding-left:5px"></div>
<div class="sl" style="left:938.25px;top:545.8px;width:51.0px;height:18.700000000000045px;line-height:16.700000000000045px;padding-top:1.5px;padding-left:5px"></div>
<div class="lab" style="left:205px;top:573.1px">平日利用希望日数</div>
<div class="sl" style="left:316.2px;top:569.1px;width:51.0px;height:18.700000000000045px;line-height:16.700000000000045px;padding-top:1.5px;padding-left:5px">4</div>
<div class="sl" style="left:372.75px;top:569.1px;width:51.0px;height:18.700000000000045px;line-height:16.700000000000045px;padding-top:1.5px;padding-left:5px">4</div>
<div class="sl" style="left:429.29999999999995px;top:569.1px;width:51.0px;height:18.700000000000045px;line-height:16.700000000000045px;padding-top:1.5px;padding-left:5px">4</div>
<div class="sl" style="left:485.84999999999997px;top:569.1px;width:50.99999999999994px;height:18.700000000000045px;line-height:16.700000000000045px;padding-top:1.5px;padding-left:5px">4</div>
<div class="sl" style="left:542.4px;top:569.1px;width:51.0px;height:18.700000000000045px;line-height:16.700000000000045px;padding-top:1.5px;padding-left:5px">4</div>
<div class="sl" style="left:598.95px;top:569.1px;width:51.0px;height:18.700000000000045px;line-height:16.700000000000045px;padding-top:1.5px;padding-left:5px">4</div>
<div class="sl" style="left:655.5px;top:569.1px;width:51.0px;height:18.700000000000045px;line-height:16.700000000000045px;padding-top:1.5px;padding-left:5px">4</div>
<div class="sl" style="left:712.05px;top:569.1px;width:51.0px;height:18.700000000000045px;line-height:16.700000000000045px;padding-top:1.5px;padding-left:5px">4</div>
<div class="sl" style="left:768.5999999999999px;top:569.1px;width:51.0px;height:18.700000000000045px;line-height:16.700000000000045px;padding-top:1.5px;padding-left:5px">4</div>
<div class="sl" style="left:825.15px;top:569.1px;width:51.0px;height:18.700000000000045px;line-height:16.700000000000045px;padding-top:1.5px;padding-left:5px">4</div>
<div class="sl" style="left:881.7px;top:569.1px;width:51.0px;height:18.700000000000045px;line-height:16.700000000000045px;padding-top:1.5px;padding-left:5px">4</div>
<div class="sl" style="left:938.25px;top:569.1px;width:51.0px;height:18.700000000000045px;line-height:16.700000000000045px;padding-top:1.5px;padding-left:5px">4</div>
<div class="lab" style="left:205px;top:595.8px">障害の有無★</div>
<div class="sl" style="left:316.2px;top:591.8px;width:51.0px;height:18.700000000000045px;line-height:16.700000000000045px;padding-top:1.5px;padding-left:5px">なし</div>
<div class="sl" style="left:372.75px;top:591.8px;width:51.0px;height:18.700000000000045px;line-height:16.700000000000045px;padding-top:1.5px;padding-left:5px">なし</div>
<div class="sl" style="left:429.29999999999995px;top:591.8px;width:51.0px;height:18.700000000000045px;line-height:16.700000000000045px;padding-top:1.5px;padding-left:5px">なし</div>
<div class="sl" style="left:485.84999999999997px;top:591.8px;width:50.99999999999994px;height:18.700000000000045px;line-height:16.700000000000045px;padding-top:1.5px;padding-left:5px">なし</div>
<div class="sl" style="left:542.4px;top:591.8px;width:51.0px;height:18.700000000000045px;line-height:16.700000000000045px;padding-top:1.5px;padding-left:5px">なし</div>
<div class="sl" style="left:598.95px;top:591.8px;width:51.0px;height:18.700000000000045px;line-height:16.700000000000045px;padding-top:1.5px;padding-left:5px">なし</div>
<div class="sl" style="left:655.5px;top:591.8px;width:51.0px;height:18.700000000000045px;line-height:16.700000000000045px;padding-top:1.5px;padding-left:5px">なし</div>
<div class="sl" style="left:712.05px;top:591.8px;width:51.0px;height:18.700000000000045px;line-height:16.700000000000045px;padding-top:1.5px;padding-left:5px">なし</div>
<div class="sl" style="left:768.5999999999999px;top:591.8px;width:51.0px;height:18.700000000000045px;line-height:16.700000000000045px;padding-top:1.5px;padding-left:5px">なし</div>
<div class="sl" style="left:825.15px;top:591.8px;width:51.0px;height:18.700000000000045px;line-height:16.700000000000045px;padding-top:1.5px;padding-left:5px">なし</div>
<div class="sl" style="left:881.7px;top:591.8px;width:51.0px;height:18.700000000000045px;line-height:16.700000000000045px;padding-top:1.5px;padding-left:5px">なし</div>
<div class="sl" style="left:938.25px;top:591.8px;width:51.0px;height:18.700000000000045px;line-height:16.700000000000045px;padding-top:1.5px;padding-left:5px">なし</div>
<div class="ab" style="left:471px;top:621.6px;width:127.3px;height:38.5px;border-radius:4px;background:#ec407a;box-shadow:0 1px 3px rgba(0,0,0,.3)"></div>
<svg style="position:absolute;left:492.2px;top:634.1759999999999px" width="9.79" height="14.23" viewBox="0 0 352 512"><path fill="#fff" d="M242.72 256l100.07-100.07c12.28-12.28 12.28-32.19 0-44.48l-22.24-22.24c-12.28-12.28-32.19-12.28-44.48 0L176 189.28 75.93 89.21c-12.28-12.28-32.19-12.28-44.48 0L9.21 111.45c-12.28 12.28-12.28 32.19 0 44.48L109.28 256 9.21 356.07c-12.28 12.28-12.28 32.19 0 44.48l22.24 22.24c12.28 12.28 32.2 12.28 44.48 0L176 322.72l100.07 100.07c12.28 12.28 32.2 12.28 44.48 0l22.24-22.24c12.28-12.28 12.28-32.19 0-44.48L242.72 256z"/></svg>
<div class="t" style="left:508px;top:634px;font-size:14px;color:#fff">キャンセル</div>
<div class="ab" style="left:607px;top:621.6px;width:118.8px;height:38.5px;border-radius:4px;background:#43a047;box-shadow:0 1px 3px rgba(0,0,0,.3)"></div>
<svg style="position:absolute;left:628.7px;top:634.7103999999999px" width="13.11" height="13.11" viewBox="0 0 512 512"><path fill="#fff" d="M173.898 439.404l-166.4-166.4c-9.997-9.997-9.997-26.206 0-36.204l36.203-36.204c9.997-9.998 26.207-9.998 36.204 0L192 312.69 432.095 72.596c9.997-9.997 26.207-9.997 36.204 0l36.203 36.204c9.997 9.997 9.997 26.206 0 36.204l-294.4 294.401c-9.998 9.997-26.207 9.997-36.204-.001z"/></svg>
<div class="t" style="left:649px;top:634px;font-size:14px;color:#fff">保存する</div>
<div class="ab" style="left:1007.5px;top:135.5px;width:0;height:0;border-left:5px solid transparent;border-right:5px solid transparent;border-bottom:7px solid #a0a0a0"></div>
<div class="ab" style="left:1007.5px;top:657.5px;width:0;height:0;border-left:5px solid transparent;border-right:5px solid transparent;border-top:7px solid #a0a0a0"></div>
</body></html>
